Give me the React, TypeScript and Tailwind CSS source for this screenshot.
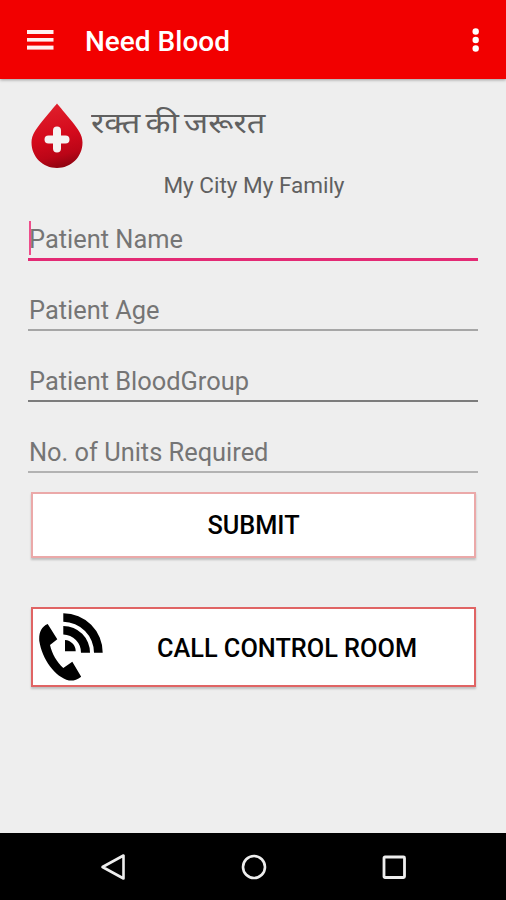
import { useState } from "react";

const FIELDS = [
    { name: "name", label: "Patient Name", line: "border-[#a3a3a3]", height: "h-[60px]" },
    { name: "age", label: "Patient Age", line: "border-[#a6a6a6]", height: "h-[70px]" },
    { name: "group", label: "Patient BloodGroup", line: "border-[#7c7c7c]", height: "h-[71px]" },
    { name: "units", label: "No. of Units Required", line: "border-[#b2b2b2]", height: "h-[71px]" },
];

const Toolbar = () => (
    <header className="flex h-[79px] shrink-0 items-center bg-[#f20000] pr-[26px] pl-[27px] text-white shadow-[0_1px_3px_rgba(0,0,0,0.35)]">
        <svg width="27" height="20" viewBox="0 0 27 20" fill="#fff0f0">
            <rect y="0" width="26.5" height="4" />
            <rect y="8" width="26.5" height="3.6" />
            <rect y="15.6" width="26.5" height="4" />
        </svg>
        <h1 className="ml-[31px] pt-1 text-[28px] leading-9 font-medium">Need Blood</h1>
        <svg className="ml-auto" width="8" height="24" viewBox="0 0 8 24" fill="white">
            <circle cx="3.7" cy="3.5" r="3.2" />
            <circle cx="3.7" cy="12" r="3.2" />
            <circle cx="3.7" cy="20.5" r="3.2" />
        </svg>
    </header>
);

const BloodDrop = () => (
    <svg width="52" height="66" viewBox="0 0 52 66">
        <defs>
            <linearGradient id="drop" x1="0.4" y1="0" x2="0.6" y2="1">
                <stop offset="0" stopColor="#e0202c" />
                <stop offset="0.5" stopColor="#d40a1c" />
                <stop offset="0.8" stopColor="#bb0517" />
                <stop offset="1" stopColor="#8d0310" />
            </linearGradient>
        </defs>
        <path d="M26 0.5C28 3 35 11 41 18.5C47 26 51.5 32 51.5 39.5C51.5 54 40 65 26 65S0.5 54 0.5 39.5C0.5 32 5 26 11 18.5C17 11 24 3 26 0.5Z" fill="url(#drop)" />
        <path d="M26 27.5V45.5M17.5 36.5H34.5" stroke="#f5f3f3" strokeWidth="8" strokeLinecap="round" />
    </svg>
);

const PhoneIcon = () => (
    <svg width="64" height="68" viewBox="0 0 64 68" fill="black">
        <path d="M24.3 0.3A39.4 39.4 0 0 1 63.7 39.7H55A31 31 0 0 0 24.3 8.7Z" />
        <path d="M24.3 13A26.7 26.7 0 0 1 51 39.7H42A18 18 0 0 0 24.3 21.5Z" />
        <path d="M26 27C32 27.5 36.7 32 36.7 38.3H26Z" />
        <path d="M8.7 11L18.3 26.3L11 32C13 41 18 49 24.3 55L33.3 48.7L42.2 63.7C38 67 34 68 30 67.5C16 64 3 46 0.3 28C-0.3 20 2 14 8.7 11Z" />
    </svg>
);

const NavBar = () => (
    <nav className="flex h-[67px] shrink-0 items-center justify-between bg-black pr-[99px] pl-[100px]">
        <svg width="26" height="28" viewBox="0 0 26 28" fill="none" stroke="#eee" strokeWidth="2.6" strokeLinejoin="round">
            <path d="M2.5 14L23.5 2.5V25.5Z" />
        </svg>
        <svg width="26" height="26" viewBox="0 0 26 26" fill="none" stroke="#eee" strokeWidth="2.6">
            <circle cx="13" cy="13" r="11" />
        </svg>
        <svg width="26" height="26" viewBox="0 0 26 26" fill="none" stroke="#eee" strokeWidth="2.8">
            <rect x="3" y="3" width="20.5" height="20.5" rx="1" />
        </svg>
    </nav>
);

export default function App() {
    const [values, setValues] = useState<Record<string, string>>({});
    const [active, setActive] = useState<string>("name");

    return (
        <div className="flex h-[900px] w-[506px] flex-col overflow-hidden bg-[#eeeeee] font-['Roboto','Noto_Sans_Devanagari','Noto_Sans',sans-serif]">
            <Toolbar />
            <main className="flex flex-1 flex-col pt-6">
                <div className="flex h-[66px] pl-[31px]">
                    <BloodDrop />
                    <h2 className="ml-2 origin-left scale-x-[1.12] text-[29px] leading-10 [word-spacing:-2.5px] whitespace-nowrap text-[#606060]">रक्त की जरूरत</h2>
                </div>
                <p className="pl-0.5 text-center text-[22.5px] leading-8 text-[#606060]">My City My Family</p>
                <form className="flex flex-col px-7" onSubmit={(e) => e.preventDefault()}>
                    {FIELDS.map((field) => (
                        <label
                            key={field.name}
                            className={`relative flex flex-col justify-end ${field.height}`}
                        >
                            <input
                                aria-label={field.label}
                                placeholder={field.label}
                                value={values[field.name] ?? ""}
                                onFocus={() => setActive(field.name)}
                                onChange={(e) => setValues({ ...values, [field.name]: e.target.value })}
                                className={`w-full pb-[3px] pl-px text-[25.4px] leading-8 text-black caret-[#e91e63] outline-none placeholder:text-[#757575] ${
                                    active === field.name ? "border-b-[3px] border-[#e32a74]" : `border-b-2 ${field.line}`
                                }`}
                            />
                            {active === field.name && !values[field.name] && (
                                <span className="absolute bottom-[6px] left-[1px] h-[34px] w-0.5 bg-[#ee4d8b]" />
                            )}
                        </label>
                    ))}
                    <button
                        type="submit"
                        className="mr-0.5 ml-[3px] mt-[19px] h-[66px] border-2 border-[#eba9a9] bg-white pt-0.5 text-[25.3px] font-medium text-black shadow-[0_2px_2px_rgba(0,0,0,0.2)]"
                    >
                        SUBMIT
                    </button>
                    <button
                        type="button"
                        className="mr-0.5 ml-[3px] mt-[49px] flex h-[80px] items-center border-2 border-[#e06464] bg-white pl-1.5 text-[25.3px] font-medium text-black shadow-[0_2px_2px_rgba(0,0,0,0.2)]"
                    >
                        <PhoneIcon />
                        <span className="flex-1 pt-[3px] pr-[3px]">CALL CONTROL ROOM</span>
                    </button>
                </form>
            </main>
            <NavBar />
        </div>
    );
}
